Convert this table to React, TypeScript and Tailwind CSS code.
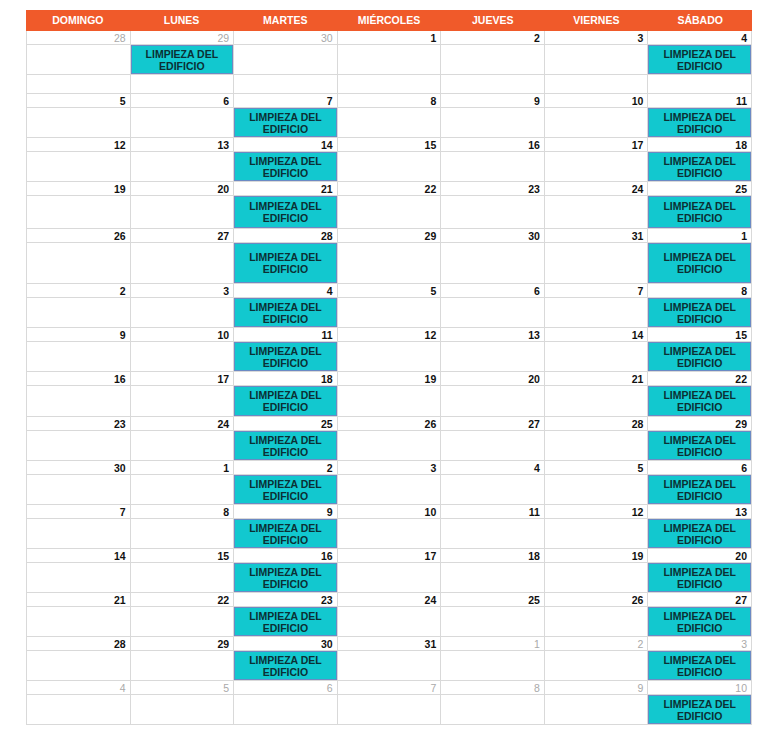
const DAYS = ["DOMINGO", "LUNES", "MARTES", "MIÉRCOLES", "JUEVES", "VIERNES", "SÁBADO"];

type Week = {
  nums: number[];
  muted: number[]; // column indexes shown in gray
  events: number[]; // column indexes with the cleaning event
  evH: string;
  extra?: boolean;
};

const weeks: Week[] = [
  { nums: [28, 29, 30, 1, 2, 3, 4], muted: [0, 1, 2], events: [1, 6], evH: "h-[30px]", extra: true },
  { nums: [5, 6, 7, 8, 9, 10, 11], muted: [], events: [2, 6], evH: "h-[30px]" },
  { nums: [12, 13, 14, 15, 16, 17, 18], muted: [], events: [2, 6], evH: "h-[30px]" },
  { nums: [19, 20, 21, 22, 23, 24, 25], muted: [], events: [2, 6], evH: "h-[33px]" },
  { nums: [26, 27, 28, 29, 30, 31, 1], muted: [], events: [2, 6], evH: "h-[41px]" },
  { nums: [2, 3, 4, 5, 6, 7, 8], muted: [], events: [2, 6], evH: "h-[30px]" },
  { nums: [9, 10, 11, 12, 13, 14, 15], muted: [], events: [2, 6], evH: "h-[30px]" },
  { nums: [16, 17, 18, 19, 20, 21, 22], muted: [], events: [2, 6], evH: "h-[31px]" },
  { nums: [23, 24, 25, 26, 27, 28, 29], muted: [], events: [2, 6], evH: "h-[30px]" },
  { nums: [30, 1, 2, 3, 4, 5, 6], muted: [], events: [2, 6], evH: "h-[30px]" },
  { nums: [7, 8, 9, 10, 11, 12, 13], muted: [], events: [2, 6], evH: "h-[30px]" },
  { nums: [14, 15, 16, 17, 18, 19, 20], muted: [], events: [2, 6], evH: "h-[30px]" },
  { nums: [21, 22, 23, 24, 25, 26, 27], muted: [], events: [2, 6], evH: "h-[30px]" },
  { nums: [28, 29, 30, 31, 1, 2, 3], muted: [4, 5, 6], events: [2, 6], evH: "h-[30px]" },
  { nums: [4, 5, 6, 7, 8, 9, 10], muted: [0, 1, 2, 3, 4, 5, 6], events: [6], evH: "h-[30px]" },
];

const EventBox = () => (
  <div className="h-full w-full flex items-center justify-center text-center bg-[#12c8cf] border border-[#6b8ac4] text-[#0b3034] text-[10.5px] font-bold leading-[12px]">
    LIMPIEZA DEL
    <br />
    EDIFICIO
  </div>
);

const WeekRow = ({ week }: { week: Week }) => (
  <div>
    <div className="grid grid-cols-7 h-[14px] border-b border-[#d9d9d9]">
      {week.nums.map((n, i) => (
        <div
          key={i}
          className={
            "border-r border-[#d9d9d9] text-right pr-[4px] text-[10.5px] leading-[14px] " +
            (week.muted.includes(i) ? "text-[#a9a9a9] font-normal" : "text-[#111] font-bold")
          }
        >
          {n}
        </div>
      ))}
    </div>
    <div className={"grid grid-cols-7 border-b border-[#d9d9d9] " + week.evH}>
      {week.nums.map((_, i) => (
        <div key={i} className="border-r border-[#d9d9d9]">
          {week.events.includes(i) && <EventBox />}
        </div>
      ))}
    </div>
    {week.extra && (
      <div className="grid grid-cols-7 h-[19px] border-b border-[#d9d9d9]">
        {week.nums.map((_, i) => (
          <div key={i} className="border-r border-[#d9d9d9]" />
        ))}
      </div>
    )}
  </div>
);

export default function App() {
  return (
    <div className="w-[763px] h-[737px] bg-white pt-[10px] font-['Liberation_Sans',Arial,sans-serif]">
      <div className="ml-[26px] w-[726px]">
        <div className="grid grid-cols-7 h-[21px] bg-[#f05a2a]">
          {DAYS.map((d) => (
            <div key={d} className="flex items-center justify-center text-white text-[10.5px] font-bold">
              {d}
            </div>
          ))}
        </div>
        <div className="border-l border-[#d9d9d9]">
          {weeks.map((w, i) => (
            <WeekRow key={i} week={w} />
          ))}
        </div>
      </div>
    </div>
  );
}
